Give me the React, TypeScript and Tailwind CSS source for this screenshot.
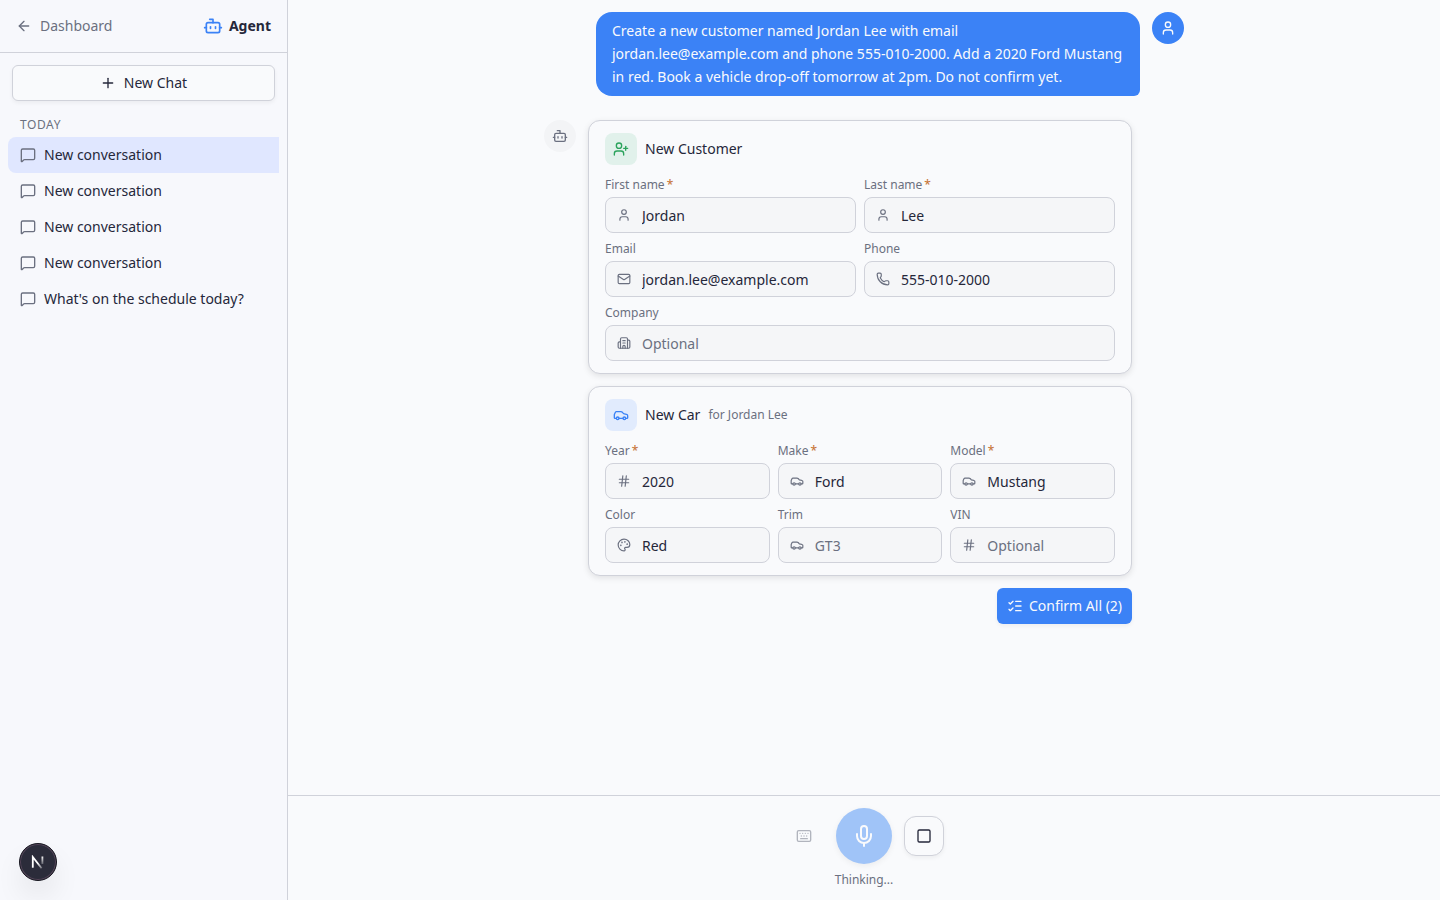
import {
    ArrowLeft,
    Bot,
    Building2,
    Car,
    Hash,
    Keyboard,
    ListChecks,
    Mail,
    MessageSquare,
    Mic,
    Palette,
    Phone,
    Plus,
    Square,
    User,
    UserPlus,
    type LucideIcon,
} from "lucide-react";

type FieldProps = {
    label: string;
    icon: LucideIcon;
    value?: string;
    placeholder?: string;
    required?: boolean;
    className?: string;
};

const conversations = [
    "New conversation",
    "New conversation",
    "New conversation",
    "New conversation",
    "What's on the schedule today?",
];

const Field: React.FC<FieldProps> = ({
    label,
    icon: Icon,
    value,
    placeholder,
    required,
    className = "",
}) => (
    <div className={`flex min-w-0 flex-col gap-1 ${className}`}>
        <div className="text-xs text-[#6b7080]">
            {label}
            {required && (
                <span className="ml-0.5 font-medium text-[#c8783c]">*</span>
            )}
        </div>
        <label className="flex h-9 items-center rounded-lg border border-[#d0d2da] bg-[#f5f6f8] pl-[11px]">
            <Icon className="mb-px size-3.5 shrink-0 text-[#6b7080]" />
            <input
                className="ml-[11px] w-full min-w-0 bg-transparent pt-0.5 text-sm text-[#25273a] outline-none placeholder:text-[#6b7080]"
                defaultValue={value}
                placeholder={placeholder}
            />
        </label>
    </div>
);

const Sidebar: React.FC = () => (
    <aside className="flex w-72 shrink-0 flex-col border-r border-[#d0d2da] bg-[#f7f8fc]">
        <div className="flex h-[53px] items-center justify-between border-b border-[#d0d2da] px-4">
            <div className="flex items-center gap-2 text-sm text-[#6b7080]">
                <ArrowLeft className="size-4" />
                Dashboard
            </div>
            <div className="flex items-center gap-1.5 text-sm font-bold">
                <Bot className="size-5 text-[#3b82f6]" />
                Agent
            </div>
        </div>
        <div className="p-3">
            <button className="flex h-9 w-full items-center justify-center gap-2 rounded-md border border-[#d0d2da] bg-[#f9fafc] text-sm shadow-[0_2px_4px_rgba(0,0,0,0.05)]">
                <Plus className="size-4" />
                New Chat
            </button>
        </div>
        <div className="px-2">
            <div className="px-3 pt-1 pb-1 text-xs tracking-wider text-[#6b7080]">
                TODAY
            </div>
            {conversations.map((title, index) => (
                <div
                    key={index}
                    className={`flex h-9 items-center gap-2 rounded-l-lg px-3 text-sm ${
                        index === 0 ? "bg-[#e0e7ff]" : ""
                    }`}
                >
                    <MessageSquare className="size-4 text-[#6b7080]" />
                    {title}
                </div>
            ))}
        </div>
    </aside>
);

const card =
    "rounded-xl border border-[#d0d2da] bg-[#f9fafc] px-4 py-3 shadow-[0_2px_6px_rgba(0,0,0,0.1)]";

export default function App() {
    return (
        <div className="flex h-screen overflow-hidden bg-[#f9fafc] font-['Noto_Sans',sans-serif] text-[#25273a]">
            <Sidebar />
            <main className="flex min-w-0 flex-1 flex-col">
                <div className="flex-1">
                    <div className="mx-auto flex max-w-2xl flex-col gap-6 px-4 pt-3">
                        {/* user message */}
                        <div className="flex h-[84px] justify-end gap-3">
                            <div className="w-[544px] rounded-2xl rounded-br-md bg-[#3b82f6] px-4 pt-[7px] text-sm leading-[23px] text-[#f9fafc]">
                                Create a new customer named Jordan Lee with
                                email jordan.lee@example.com and phone
                                555-010-2000. Add a 2020 Ford Mustang in red.
                                Book a vehicle drop-off tomorrow at 2pm. Do not
                                confirm yet.
                            </div>
                            <div className="flex size-8 items-center justify-center rounded-full bg-[#3b82f6] text-[#f9fafc]">
                                <User className="size-4" />
                            </div>
                        </div>
                        {/* agent reply */}
                        <div className="flex gap-3">
                            <div className="flex size-8 shrink-0 items-center justify-center rounded-full bg-[#f3f4f6] text-[#6b7080]">
                                <Bot className="size-4" />
                            </div>
                            <div className="flex w-[544px] flex-col gap-3">
                                <div className={card}>
                                    <div className="mb-3 flex items-center gap-2">
                                        <div className="flex size-8 items-center justify-center rounded-lg bg-[#e1f1eb] text-[#2ba35c]">
                                            <UserPlus className="size-4" />
                                        </div>
                                        <span className="text-sm">
                                            New Customer
                                        </span>
                                    </div>
                                    <div className="grid grid-cols-2 gap-2">
                                        <Field label="First name" icon={User} value="Jordan" required />
                                        <Field label="Last name" icon={User} value="Lee" required />
                                        <Field label="Email" icon={Mail} value="jordan.lee@example.com" />
                                        <Field label="Phone" icon={Phone} value="555-010-2000" />
                                        <Field
                                            label="Company"
                                            icon={Building2}
                                            placeholder="Optional"
                                            className="col-span-2"
                                        />
                                    </div>
                                </div>
                                <div className={card}>
                                    <div className="mb-3 flex items-center gap-2">
                                        <div className="flex size-8 items-center justify-center rounded-lg bg-[#e1ebfd] text-[#3b82f6]">
                                            <Car className="size-4" />
                                        </div>
                                        <span className="text-sm">New Car</span>
                                        <span className="text-xs text-[#6b7080]">
                                            for Jordan Lee
                                        </span>
                                    </div>
                                    <div className="grid grid-cols-3 gap-2">
                                        <Field label="Year" icon={Hash} value="2020" required />
                                        <Field label="Make" icon={Car} value="Ford" required />
                                        <Field label="Model" icon={Car} value="Mustang" required />
                                        <Field label="Color" icon={Palette} value="Red" />
                                        <Field label="Trim" icon={Car} placeholder="GT3" />
                                        <Field label="VIN" icon={Hash} placeholder="Optional" />
                                    </div>
                                </div>
                                <button className="flex h-9 w-[135px] items-center justify-center gap-1.5 self-end rounded-md bg-[#3b82f6] text-sm whitespace-nowrap text-[#f9fafc] shadow-[0_2px_4px_rgba(0,0,0,0.05)]">
                                    <ListChecks className="size-4" />
                                    Confirm All (2)
                                </button>
                            </div>
                        </div>
                    </div>
                </div>
                {/* voice controls */}
                <div className="flex flex-col items-center gap-2 border-t border-[#d0d2da] py-3">
                    <div className="flex items-center gap-3">
                        <button className="flex size-10 items-center justify-center text-[#6b7080] opacity-50">
                            <Keyboard className="size-4" />
                        </button>
                        <button className="flex size-14 items-center justify-center rounded-full bg-[#a0c4f8] text-[#f9fafc] shadow-[0_2px_6px_rgba(0,0,0,0.06)]">
                            <Mic className="size-6" />
                        </button>
                        <button className="flex size-10 items-center justify-center rounded-xl border border-[#d0d2da] bg-[#f9fafc] shadow-[0_2px_4px_rgba(0,0,0,0.05)]">
                            <Square className="size-4" />
                        </button>
                    </div>
                    <div className="text-xs text-[#6b7080]">Thinking...</div>
                </div>
            </main>
            {/* dev tools badge */}
            <div className="fixed bottom-[19px] left-[19px] flex size-[38px] items-center justify-center rounded-full border border-[#171720] bg-[#2b2c3a] shadow-[inset_0_0_0_1px_#55465a,0_16px_32px_-8px_rgba(0,0,0,0.2)]">
                <svg width="14" height="14" viewBox="0 0 14 14" fill="none">
                    <path d="M1.8 12.8V2L10.6 13.2" stroke="url(#n-left)" strokeWidth="1.8" />
                    <path d="M11.4 1.5V9" stroke="url(#n-right)" strokeWidth="1.8" />
                    <defs>
                        <linearGradient id="n-left" x1="7" y1="8" x2="11.5" y2="14" gradientUnits="userSpaceOnUse">
                            <stop stopColor="#fff" />
                            <stop offset="1" stopColor="#fff" stopOpacity="0.2" />
                        </linearGradient>
                        <linearGradient id="n-right" x1="11" y1="1" x2="11" y2="11" gradientUnits="userSpaceOnUse">
                            <stop stopColor="#fff" />
                            <stop offset="1" stopColor="#fff" stopOpacity="0.1" />
                        </linearGradient>
                    </defs>
                </svg>
            </div>
        </div>
    );
}
